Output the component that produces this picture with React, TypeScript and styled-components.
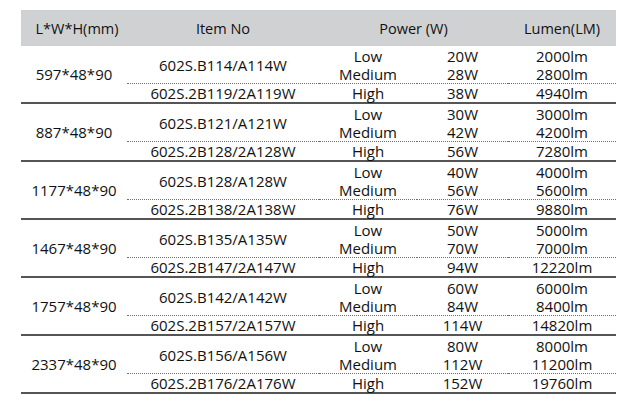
import React from "react";
import styled, { createGlobalStyle } from "styled-components";

const GlobalStyle = createGlobalStyle`
  html, body { margin: 0; padding: 0; background: #ffffff; }
  body { font-family: "Open Sans", "Noto Sans", "Liberation Sans", sans-serif; color: #111111; }
  * { box-sizing: border-box; }
`;

const COLS = "106px 192px 98px 91px 108px";

const Page = styled.div`
  padding: 10px 0 0 21px;
`;

const Table = styled.div`
  width: 595px;
  display: flex;
  flex-direction: column;
`;

const HeaderRow = styled.div`
  display: grid;
  grid-template-columns: 106px 192px 189px 108px;
  height: 36px;
  background: #d0d1d3;
  align-items: center;
  font-size: 14.5px;
`;

const HeaderCell = styled.div<{ $shift?: number }>`
  text-align: center;
  transform: translateX(${(p) => p.$shift ?? 0}px);
`;

const Group = styled.div`
  display: grid;
  grid-template-columns: ${COLS};
  grid-template-rows: 19px 19px 18px;
  border-bottom: 2px solid #555555;
  font-size: 15px;
  line-height: 18px;
`;

const Cell = styled.div<{ $row: number; $col: number; $span?: number; $dotted?: boolean }>`
  grid-row: ${(p) => `${p.$row} / span ${p.$span ?? 1}`};
  grid-column: ${(p) => p.$col};
  display: flex;
  align-items: center;
  justify-content: center;
  white-space: nowrap;
  border-bottom: ${(p) => (p.$dotted ? "1px dotted #6f6f6f" : "none")};
`;

type Spec = {
  dim: string;
  items: [string, string];
  rows: [string, string, string][];
};

const data: Spec[] = [
  { dim: "597*48*90", items: ["602S.B114/A114W", "602S.2B119/2A119W"], rows: [["Low", "20W", "2000lm"], ["Medium", "28W", "2800lm"], ["High", "38W", "4940lm"]] },
  { dim: "887*48*90", items: ["602S.B121/A121W", "602S.2B128/2A128W"], rows: [["Low", "30W", "3000lm"], ["Medium", "42W", "4200lm"], ["High", "56W", "7280lm"]] },
  { dim: "1177*48*90", items: ["602S.B128/A128W", "602S.2B138/2A138W"], rows: [["Low", "40W", "4000lm"], ["Medium", "56W", "5600lm"], ["High", "76W", "9880lm"]] },
  { dim: "1467*48*90", items: ["602S.B135/A135W", "602S.2B147/2A147W"], rows: [["Low", "50W", "5000lm"], ["Medium", "70W", "7000lm"], ["High", "94W", "12220lm"]] },
  { dim: "1757*48*90", items: ["602S.B142/A142W", "602S.2B157/2A157W"], rows: [["Low", "60W", "6000lm"], ["Medium", "84W", "8400lm"], ["High", "114W", "14820lm"]] },
  { dim: "2337*48*90", items: ["602S.B156/A156W", "602S.2B176/2A176W"], rows: [["Low", "80W", "8000lm"], ["Medium", "112W", "11200lm"], ["High", "152W", "19760lm"]] },
];

export default function App() {
  return (
    <Page>
      <GlobalStyle />
      <Table>
        <HeaderRow>
          <HeaderCell $shift={3}>L*W*H(mm)</HeaderCell>
          <HeaderCell>Item No</HeaderCell>
          <HeaderCell>Power (W)</HeaderCell>
          <HeaderCell>Lumen(LM)</HeaderCell>
        </HeaderRow>
        {data.map((g) => (
          <Group key={g.dim}>
            <Cell $row={1} $col={1} $span={3}>{g.dim}</Cell>
            <Cell $row={1} $col={2} $span={2} $dotted>{g.items[0]}</Cell>
            <Cell $row={3} $col={2}>{g.items[1]}</Cell>
            {g.rows.map((r, i) =>
              r.map((v, j) => (
                <Cell key={`${i}-${j}`} $row={i + 1} $col={j + 3} $dotted={i === 1}>
                  {v}
                </Cell>
              ))
            )}
          </Group>
        ))}
      </Table>
    </Page>
  );
}
